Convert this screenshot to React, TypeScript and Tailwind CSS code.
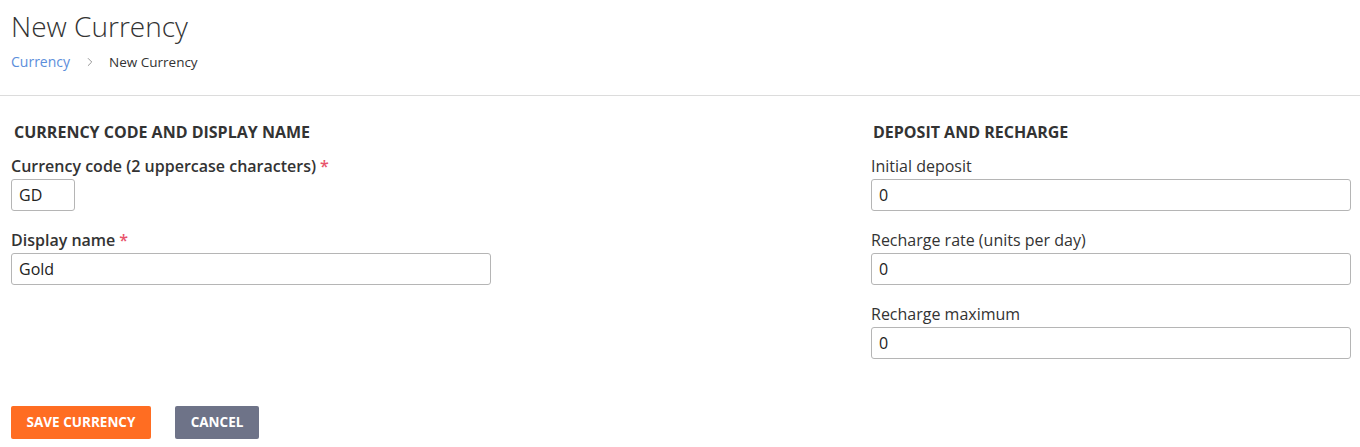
import { ChevronRight } from 'lucide-react'

const font = { fontFamily: '"Open Sans", "Noto Sans", sans-serif' }

function Field({ label, value, required, width, bold }: { label: string; value: string; required?: boolean; width: string; bold?: boolean }) {
  return (
    <div className="mb-[18px]">
      <label className={`block text-[16px] leading-[22px] text-[#333] mb-[2px] ${bold ? 'font-semibold' : ''}`}>
        {label}
        {required && <span className="text-[#e8536b] ml-1">*</span>}
      </label>
      <input
        readOnly
        value={value}
        className={`${width} h-[32px] border border-[#b5b5b5] rounded-[3px] px-[7px] text-[16px] text-[#222] outline-none`}
      />
    </div>
  )
}

export default function App() {
  return (
    <div className="min-h-screen bg-white" style={font}>
      <div className="px-[11px] pt-[8px] pb-[23px] border-b border-[#dcdcdc]">
        <h1 className="text-[28px] font-light leading-[36px] text-[#333]">New Currency</h1>
        <div className="flex items-center mt-[8px] text-[14px] leading-[20px]">
          <span className="text-[#5b8edb]">Currency</span>
          <ChevronRight size={14} strokeWidth={1.5} className="text-[#888] ml-[13px] mr-[12px]" />
          <span className="text-[#333] text-[13.5px]">New Currency</span>
        </div>
      </div>

      <div className="flex pl-[11px] pt-[25px]">
        <div className="w-[860px] shrink-0">
          <h2 className="text-[16px] font-bold uppercase text-[#333] leading-[22px] ml-[3px] mb-[12px]">Currency code and display name</h2>
          <Field label="Currency code (2 uppercase characters)" value="GD" required width="w-[64px]" bold />
          <Field label="Display name" value="Gold" required width="w-[480px]" bold />
        </div>
        <div className="w-[480px] shrink-0">
          <h2 className="text-[16px] font-bold uppercase text-[#333] leading-[22px] ml-[2px] mb-[12px]">Deposit and recharge</h2>
          <Field label="Initial deposit" value="0" width="w-[480px]" />
          <Field label="Recharge rate (units per day)" value="0" width="w-[480px]" />
          <Field label="Recharge maximum" value="0" width="w-[480px]" />
        </div>
      </div>

      <div className="flex gap-[24px] px-[11px] pt-[29px]">
        <button className="h-[33px] w-[140px] bg-[#ff6d22] text-white text-[13.5px] font-bold uppercase rounded-[2px]">Save currency</button>
        <button className="h-[33px] w-[84px] bg-[#6e7388] text-white text-[13.5px] font-bold uppercase rounded-[2px]">Cancel</button>
      </div>
    </div>
  )
}
